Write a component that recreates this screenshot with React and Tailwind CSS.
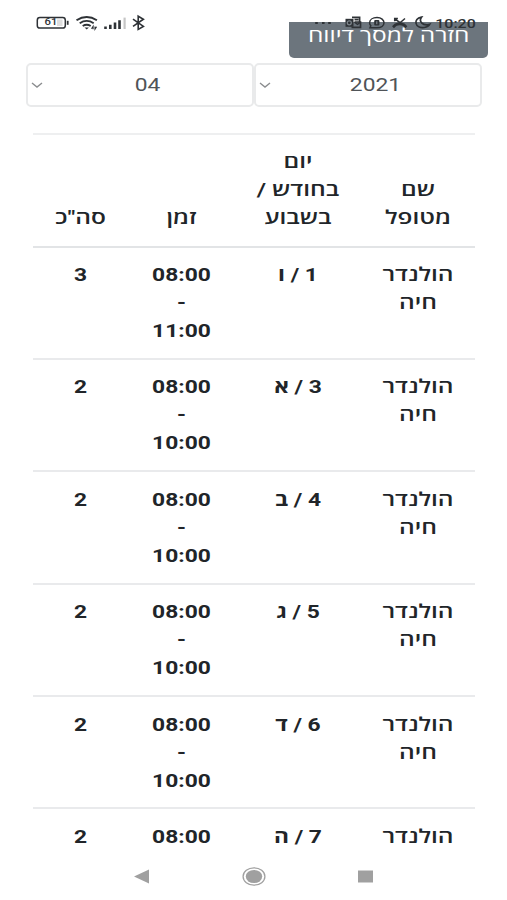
import clsx from "clsx";

const columns = [
  { key: "name", lines: ["שם", "מטופל"] },
  { key: "day", lines: ["יום", "בחודש /", "בשבוע"] },
  { key: "time", lines: ["זמן"] },
  { key: "total", lines: ['סה"כ'] },
];

const visits = [
  { name: ["הולנדר", "חיה"], day: "1 / ו", time: ["08:00", "-", "11:00"], total: "3" },
  { name: ["הולנדר", "חיה"], day: "3 / א", time: ["08:00", "-", "10:00"], total: "2" },
  { name: ["הולנדר", "חיה"], day: "4 / ב", time: ["08:00", "-", "10:00"], total: "2" },
  { name: ["הולנדר", "חיה"], day: "5 / ג", time: ["08:00", "-", "10:00"], total: "2" },
  { name: ["הולנדר", "חיה"], day: "6 / ד", time: ["08:00", "-", "10:00"], total: "2" },
  { name: ["הולנדר"], day: "7 / ה", time: ["08:00"], total: "2" },
];

const grid = "grid grid-cols-[114px_126px_107px_95px]";

// One line of wide text, centred in its cell.
function Line({ children, hebrew, className }) {
  return (
    <span
      className={clsx(
        "flex h-7 items-center justify-center whitespace-nowrap",
        hebrew ? "scale-x-[1.31]" : "scale-x-[1.22]",
        className
      )}
    >
      {children}
    </span>
  );
}

function StatusBar() {
  return (
    <header className="absolute inset-x-0 top-0 z-10 h-11 text-[#2e3236]">
      <svg className="h-11 w-[507px]" viewBox="0 0 507 44" fill="none" stroke="currentColor">
        <rect x="37.3" y="17.6" width="28" height="10.4" rx="2.6" strokeWidth="1.5" />
        <path d="M67.7 20.8v4" strokeWidth="1.8" />
        <rect x="57" y="19.5" width="5.5" height="6.5" fill="#dedede" stroke="none" />

        <path d="M76.500 20.300q10.200-6.600 20.400 0M79.700 23.200q7-4.600 14 0M82.700 26q4-2.600 8 0" strokeWidth="1.900" />
        <path d="M84.500 27.400h4.400l-2.200 2.200z" fill="currentColor" stroke="none" />
        <path d="M91.500 28.800l1.600-2.400v2.800M95 26.600v2.600l1.600-2.400" strokeWidth="1.100" />

        <path d="M105.500 29v-2.600M110.300 29v-4.200M115 29v-6.400M119.500 29v-8.800" strokeWidth="2.600" />
        <path d="M124.600 29V17.600" strokeWidth="2.200" stroke="#c6c6c6" />
        <path d="M133 19.200l10.400 7.200-5.200 3V16.200l5.200 3-10.400 7.200" strokeWidth="1.600" />

        <path d="M315.200 23h2.600M322 23h2.600M328.200 23h2.600" strokeWidth="2" />

        <rect x="345.500" y="18.800" width="8" height="8" fill="currentColor" stroke="none" />
        <circle cx="349.300" cy="22.800" r="2" stroke="#7d858c" strokeWidth="1.200" />
        <path d="M352 17.400h7.600v4.400M354.500 19.600h4M354.500 22h6v5.400h-9" strokeWidth="1.700" />
        <path d="M354.500 22.200l3 2.200 3-2.200" strokeWidth="1.400" />

        <path d="M370 27.800h7c4.300 0 7-2.200 7-5s-2.700-5.200-7-5.200-7.400 2.200-7.400 5.200c0 1.200.4 2.200 1.200 3z" strokeWidth="1.500" />
        <rect x="374.200" y="20" width="5.200" height="5.400" rx="1" fill="currentColor" stroke="none" />
        <path d="M376.800 21.200v3" stroke="#89919a" strokeWidth="1" />

        <path d="M393 27.200l2.600-2.400q4.100-1.900 8.200 0l2.600 2.400" strokeWidth="2.800" />
        <path d="M395 18.900l5 3.800 5-4.200M394.700 21.300v-2.700h3.200" strokeWidth="1.500" />

        <path d="M421.500 17.200c-4.500.7-6 3.300-5.500 6 .6 3.200 4.200 4.900 8.300 4.300 2.800-.4 4.700-1.800 5.500-3.300-3.100 1-6.500.4-8.200-1.400-1.600-1.800-1.400-3.900-.1-5.600z" strokeWidth="1.700" />
      </svg>
      <span className="absolute left-[37px] top-[17px] flex h-3 w-7 scale-x-[1.25] items-center justify-center text-[9px] font-medium">
        61
      </span>
      <span className="absolute left-[435px] top-[15px] flex h-4 w-[41px] scale-x-[1.18] items-center justify-center text-[13.500px] font-medium">
        10:20
      </span>
    </header>
  );
}

function Select({ value }) {
  return (
    <div className="flex h-11 w-[228px] items-center rounded-[5px] border-2 border-[#e9eaeb] pl-[3px] text-[#505458]">
      <svg className="h-2 w-3 shrink-0" viewBox="0 0 12 8" fill="none" stroke="#8b8d8f" strokeWidth="1.400">
        <path d="M1 2l5 4 5-4" />
      </svg>
      <Line className="w-[210px] text-[18.700px]">{value}</Line>
    </div>
  );
}

function VisitRow({ visit }) {
  return (
    <div className={clsx(grid, "h-[112.400px] shrink-0 border-b-2 border-[#e9eaec] pt-[13.500px]")}>
      <div className="font-semibold">
        {visit.name.map((part) => (
          <Line key={part} hebrew>
            {part}
          </Line>
        ))}
      </div>
      <div>
        <Line>{visit.day}</Line>
      </div>
      <div>
        {visit.time.map((part) => (
          <Line key={part}>{part}</Line>
        ))}
      </div>
      <div>
        <Line>{visit.total}</Line>
      </div>
    </div>
  );
}

function NavigationBar() {
  return (
    <nav className="flex h-[45px] shrink-0 items-start bg-white pl-[133px] pt-[10.500px] text-[#a0a0a0]">
      <svg className="h-5 w-[242px]" viewBox="0 0 242 20" fill="currentColor">
        <path d="M1 10.500L16 3.500v14z" />
        <ellipse cx="121" cy="10.500" rx="8.200" ry="6.600" />
        <ellipse cx="121" cy="10.500" rx="10.900" ry="8.700" fill="none" stroke="currentColor" strokeWidth="1.300" />
        <path d="M225 4.500h15v12h-15z" />
      </svg>
    </nav>
  );
}

export default function App() {
  return (
    <div className="relative flex h-[900px] w-[507px] flex-col overflow-hidden bg-white font-['Roboto','Open_Sans',sans-serif] text-[#212529]">
      <StatusBar />
      <main className="flex h-[855px] flex-col overflow-hidden pt-[22px]">
        <button
          dir="rtl"
          className="ml-[289px] flex h-9 w-[199px] shrink-0 items-center justify-center rounded-b-[5px] bg-[#6c757d] pb-[7px] text-[18.700px] text-white"
        >
          <Line hebrew>חזרה למסך דיווח</Line>
        </button>
        <div className="ml-[26px] mt-[5px] flex shrink-0">
          <Select value="04" />
          <Select value="2021" />
        </div>
        <section
          dir="rtl"
          className="ml-[33px] mt-[26px] flex w-[442px] shrink-0 flex-col border-t-2 border-[#eeeff0] text-[18.700px] font-bold"
        >
          <div className={clsx(grid, "h-[112.500px] items-end border-b-2 border-[#e2e4e6] pb-[13.500px] font-semibold")}>
            {columns.map((column) => (
              <div key={column.key}>
                {column.lines.map((line) => (
                  <Line key={line} hebrew>
                    {line}
                  </Line>
                ))}
              </div>
            ))}
          </div>
          {visits.map((visit) => (
            <VisitRow key={visit.day} visit={visit} />
          ))}
        </section>
      </main>
      <NavigationBar />
    </div>
  );
}
